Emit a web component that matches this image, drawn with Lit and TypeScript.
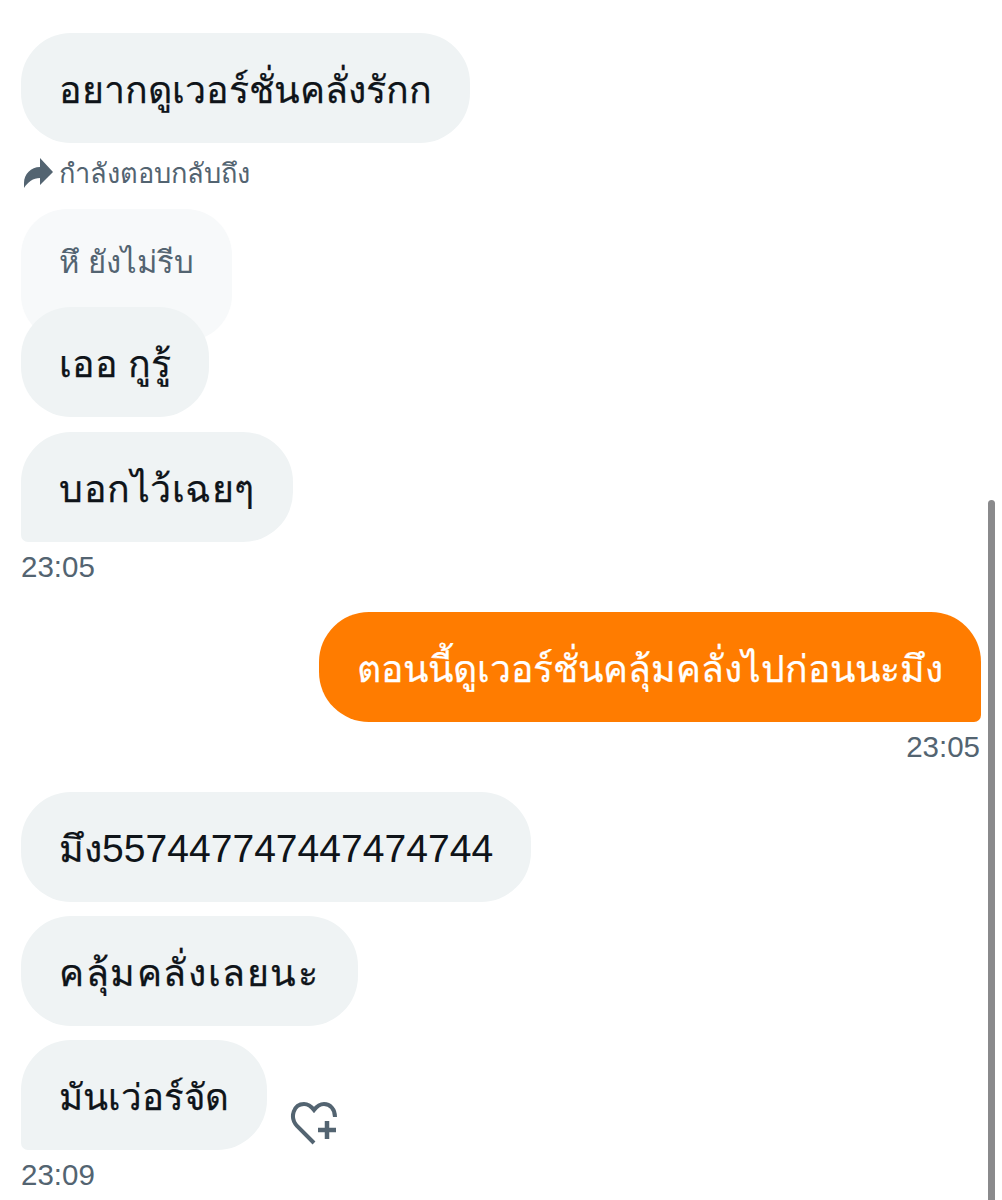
import { LitElement, html, css } from "lit";
import { customElement } from "lit/decorators.js";

@customElement("app-root")
export class AppRoot extends LitElement {
  static styles = css`
    :host {
      display: block;
      position: relative;
      height: 1200px;
      overflow: hidden;
      background: #fff;
      font-family: "Liberation Sans", "Noto Sans", "DejaVu Sans", sans-serif;
      color: #0f1419;
    }
    .chat {
      display: flex;
      flex-direction: column;
      align-items: flex-start;
      padding: 33px 21px 0;
    }
    .bubble {
      box-sizing: border-box;
      height: 110px;
      display: flex;
      align-items: center;
      padding: 3px 38px 0;
      border-radius: 50px;
      background: #eff3f4;
      font-size: 37.5px;
      -webkit-text-stroke: 0.25px currentColor;
      white-space: nowrap;
      margin-bottom: 14px;
    }
    .digits { font-size: 39.1px; -webkit-text-stroke: 0; }
    .wide { letter-spacing: 1.6px; }
    .mid { letter-spacing: 0.5px; }
    .narrow { font-size: 36.6px; }
    .tail-l { border-bottom-left-radius: 7px; margin-bottom: 0; }
    .me {
      align-self: flex-end;
      background: #ff7c00;
      color: #fff;
      font-size: 37.3px;
      border-radius: 50px 50px 7px 50px;
      margin: 29px 0 0;
    }
    .time {
      font-size: 29.5px;
      line-height: 32px;
      color: #536471;
      margin-top: 9px;
    }
    .time.right { align-self: flex-end; margin-right: 1px; }
    .next { margin-top: 29px; }
    .replying {
      display: flex;
      align-items: center;
      gap: 4px;
      font-size: 27.2px;
      color: #536471;
      height: 32px;
      margin: 0 0 20px;
    }
    .replying svg { width: 32px; height: 32px; fill: #536471; margin-left: 2px; }
    .quoted {
      box-sizing: border-box;
      height: 132px;
      padding: 28px 38px 0;
      border-radius: 46px;
      background: #f7f9fa;
      color: #536471;
      font-size: 31px;
      white-space: nowrap;
      margin-bottom: -34px;
    }
    .row { display: flex; align-items: flex-end; gap: 22px; }
    .row .bubble { margin: 0; }
    .heart { width: 50px; height: 50px; }
    .heart path { fill: none; stroke: #536471; stroke-width: 4; }
    .heart path.plus { stroke-width: 4.5; }
    .scrollbar {
      position: absolute;
      left: 988px;
      top: 500px;
      bottom: -10px;
      width: 7px;
      border-radius: 4px;
      background: #8a8a8c;
    }
    .after { position: relative; margin-bottom: 15px; }
  `;

  render() {
    return html`
      <div class="chat">
        <div class="bubble">อยากดูเวอร์ชั่นคลั่งรักก</div>
        <div class="replying">
          <svg viewBox="0 0 32 32"><path d="M17 1 30 15 17 28V21C10 21 5 25 1 31V26C1 17 8 10 17 10Z" /></svg>
          กำลังตอบกลับถึง
        </div>
        <div class="quoted">หึ ยังไม่รีบ</div>
        <div class="bubble after">เออ กูรู้</div>
        <div class="bubble tail-l mid">บอกไว้เฉยๆ</div>
        <div class="time">23:05</div>
        <div class="bubble me">ตอนนี้ดูเวอร์ชั่นคลุ้มคลั่งไปก่อนนะมึง</div>
        <div class="time right">23:05</div>
        <div class="bubble next">มึง<span class="digits">557447747447474744</span></div>
        <div class="bubble wide">คลุ้มคลั่งเลยนะ</div>
        <div class="row">
          <div class="bubble tail-l narrow">มันเว่อร์จัด</div>
          <svg class="heart" viewBox="0 0 50 50">
            <path d="M25 43 8 26C0 17 5 4 15 4 19 4 22 6 25 10 28 6 31 4 35 4 41 4 46 9 46 17" />
            <path class="plus" d="M38 21V39M29 30H47" />
          </svg>
        </div>
        <div class="time">23:09</div>
      </div>
      <div class="scrollbar"></div>
    `;
  }
}
